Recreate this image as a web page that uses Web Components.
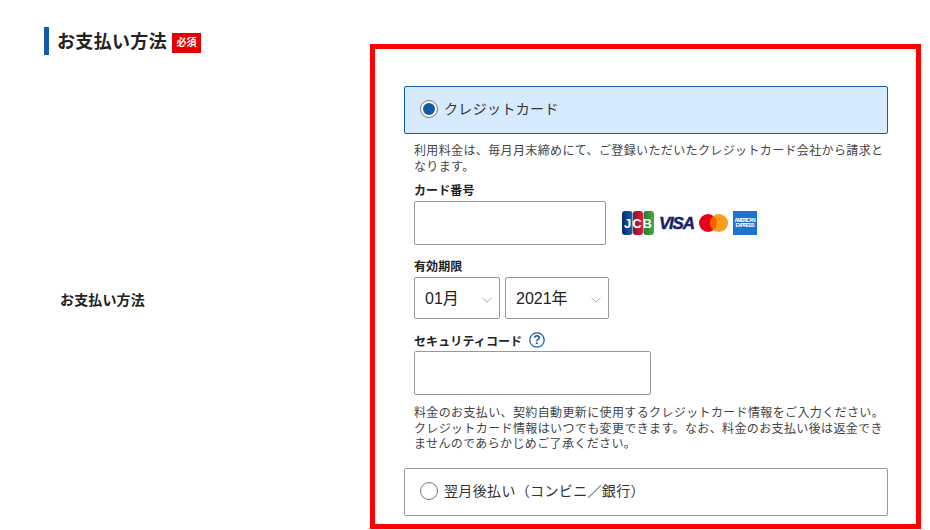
<!DOCTYPE html>
<html lang="ja">
<head>
<meta charset="utf-8">
<title>お支払い方法</title>
<style>
    html, body { margin: 0; background: #fff; }
    body {
        font-family: "Liberation Sans", "Noto Sans CJK JP", sans-serif;
        color: #222;
        width: 930px;
        height: 530px;
        overflow: hidden;
    }
</style>
</head>
<body>
<pay-page>
    <section-title slot="title" text="お支払い方法"></section-title>
    <span slot="label">お支払い方法</span>
    <pay-option label="クレジットカード" checked></pay-option>
    <note-text class="first">利用料金は、毎月月末締めにて、ご登録いただいたクレジットカード会社から請求となります。</note-text>
    <field-row label="カード番号" class="card">
        <text-box style="--w:192px;--h:44px"></text-box>
        <card-logos></card-logos>
    </field-row>
    <field-row label="有効期限" class="expiry">
        <select-box value="01月" style="--w:86px"></select-box>
        <select-box value="2021年" style="--w:104px"></select-box>
    </field-row>
    <field-row label="セキュリティコード" help class="code">
        <text-box style="--w:237px;--h:44px"></text-box>
    </field-row>
    <note-text class="last">料金のお支払い、契約自動更新に使用するクレジットカード情報をご入力ください。クレジットカード情報はいつでも変更できます。なお、料金のお支払い後は返金できませんのであらかじめご了承ください。</note-text>
    <pay-option label="翌月後払い（コンビニ／銀行）"></pay-option>
</pay-page>

<script>
    // small helper, every element gets an open shadow root from a string
    const define = (name, html, init) => customElements.define(name, class extends HTMLElement {
        connectedCallback() {
            if (this.shadowRoot) return;
            this.attachShadow({ mode: 'open' }).innerHTML = html;
            if (init) init(this, this.shadowRoot);
        }
    });

    define('pay-page', `
        <style>
            :host { display: grid; grid-template-columns: 370px 551px; height: 530px; }
            .left { padding: 27px 0 0 44px; }
            .label { margin: 235px 0 0 16px; font-size: 14px; font-weight: bold; line-height: 20px; color: #222; letter-spacing: .15px; }
            .frame {
                margin-top: 44px;
                height: 485px;
                box-sizing: border-box;
                border: 5px solid #f00;
                padding: 37px 28px 0 29px;
            }
        </style>
        <div class="left">
            <slot name="title"></slot>
            <div class="label"><slot name="label"></slot></div>
        </div>
        <div class="frame"><slot></slot></div>
    `);

    define('section-title', `
        <style>
            :host { display: flex; align-items: center; height: 28px; border-left: 5px solid #0f5ca8; padding-left: 8px; }
            b { font-size: 18px; line-height: 28px; color: #222; letter-spacing: .33px; margin-top: 1px; }
            i {
                font-style: normal; font-weight: bold; font-size: 10px; line-height: 20px; color: #fff;
                background: #e60000; width: 29px; height: 20px; text-align: center; margin: 4px 0 0 5px;
            }
        </style>
        <b></b><i>必須</i>
    `, (el, root) => { root.querySelector('b').textContent = el.getAttribute('text'); });

    define('pay-option', `
        <style>
            :host {
                display: flex; align-items: center; box-sizing: border-box; height: 48px;
                border: 1px solid #999; border-radius: 2px; padding-left: 15px; background: #fff;
            }
            :host([checked]) { background: #d5eafd; border-color: #0f5ca8; }
            .dot {
                box-sizing: border-box; width: 18px; height: 18px; border-radius: 50%; border: 1px solid #777; background: #fff;
                display: flex; align-items: center; justify-content: center; margin: 0 6px 2px 0;
            }
            :host([checked]) .dot::after { content: ""; width: 12px; height: 12px; border-radius: 50%; background: #0f5ca8; }
            span { font-size: 14px; color: #333; letter-spacing: .35px; margin-bottom: 4px; }
        </style>
        <div class="dot"></div><span></span>
    `, (el, root) => { root.querySelector('span').textContent = el.getAttribute('label'); });

    define('note-text', `
        <style>
            :host { display: block; margin-left: 10px; font-size: 12px; line-height: 15.6px; color: #444; letter-spacing: .37px; width: 474px; }
            :host(.first) { margin-top: 10px; }
            :host(.last) { margin-top: 11px; margin-bottom: 15px; }
        </style>
        <slot></slot>
    `);

    define('field-row', `
        <style>
            :host { display: block; margin-left: 10px; }
            :host(.card) { margin-top: 5px; }
            :host(.expiry) { margin-top: 11px; }
            :host(.code) { margin-top: 12px; }
            :host(.code) .name { margin-bottom: 2px; }
            .name { display: flex; align-items: center; height: 18px; font-size: 12px; font-weight: bold; color: #222; margin-bottom: 3px; letter-spacing: .1px; }
            .row { display: flex; align-items: center; gap: 5px; }
            svg { margin-left: 7px; }
        </style>
        <div class="name"><span></span></div>
        <div class="row"><slot></slot></div>
    `, (el, root) => {
        root.querySelector('span').textContent = el.getAttribute('label');
        if (el.hasAttribute('help')) {
            root.querySelector('.name').insertAdjacentHTML('beforeend', `
                <svg width="16" height="16" viewBox="0 0 16 16">
                    <circle cx="8" cy="8" r="7.2" fill="none" stroke="#0f5ca8" stroke-width="1.2"/>
                    <text x="8" y="12.2" text-anchor="middle" font-size="12" font-weight="bold" fill="#0f5ca8" font-family="Liberation Sans">?</text>
                </svg>`);
        }
    });

    define('text-box', `
        <style>
            :host { display: block; box-sizing: border-box; width: var(--w); height: var(--h); border: 1px solid #999; border-radius: 2px; background: #fff; }
        </style>
    `);

    define('select-box', `
        <style>
            :host {
                display: flex; align-items: center; justify-content: space-between; box-sizing: border-box;
                width: var(--w); height: 42px; border: 1px solid #999; border-radius: 2px; padding: 0 7px 0 10px; background: #fff;
                font-size: 16px; color: #222;
            }
            span { margin-bottom: 3px; }
            svg { display: block; margin-top: 3px; }
        </style>
        <span></span>
        <svg width="10" height="6" viewBox="0 0 10 6"><path d="M.5 .8 5 5.2 9.5 .8" fill="none" stroke="#aaa"/></svg>
    `, (el, root) => { root.querySelector('span').textContent = el.getAttribute('value'); });

    define('card-logos', `
        <style>
            :host { display: flex; align-items: center; margin-left: 11px; }
            svg { display: block; }
        </style>
        <svg width="32" height="24" viewBox="0 0 32 24" style="margin-left:0">
            <defs>
                <linearGradient id="jb"><stop offset="0" stop-color="#0a2a6e"/><stop offset="1" stop-color="#1560b0"/></linearGradient>
                <linearGradient id="jr"><stop offset="0" stop-color="#8c1230"/><stop offset="1" stop-color="#d8213b"/></linearGradient>
                <linearGradient id="jg"><stop offset="0" stop-color="#1f7a34"/><stop offset="1" stop-color="#46ad3f"/></linearGradient>
            </defs>
            <rect x="0" y="0" width="10.5" height="24" rx="3" fill="url(#jb)"/>
            <rect x="11" y="0" width="10" height="24" rx="3" fill="url(#jr)"/>
            <rect x="21.5" y="0" width="10.5" height="24" rx="3" fill="url(#jg)"/>
            <text x="16" y="17" text-anchor="middle" font-size="13" font-weight="bold" fill="#fff" textLength="28" font-family="Liberation Sans">JCB</text>
        </svg>
        <svg width="40" height="20" viewBox="0 0 40 20" style="margin-left:4px">
            <text x="1" y="16" font-size="17" font-weight="bold" font-style="italic" fill="#14206e" stroke="#14206e" stroke-width=".4" textLength="36" font-family="Liberation Sans">VISA</text>
        </svg>
        <svg width="30" height="18" viewBox="0 0 30 18" style="margin-left:1px">
            <circle cx="9" cy="9" r="9" fill="#e8001c"/>
            <circle cx="20" cy="9" r="9" fill="#f79e1b"/>
            <path d="M14.5 2a9 9 0 0 1 0 14 9 9 0 0 1 0-14z" fill="#ff5f00"/>
        </svg>
        <svg width="24" height="24" viewBox="0 0 24 24" style="margin-left:4px">
            <rect width="24" height="24" fill="#1f72cd"/>
            <text x="12" y="11" text-anchor="middle" font-size="5" font-weight="bold" fill="#fff" textLength="21" font-family="Liberation Sans">AMERICAN</text>
            <text x="12" y="16" text-anchor="middle" font-size="5" font-weight="bold" fill="#fff" textLength="19" font-family="Liberation Sans">EXPRESS</text>
        </svg>
    `);
</script>
</body>
</html>
